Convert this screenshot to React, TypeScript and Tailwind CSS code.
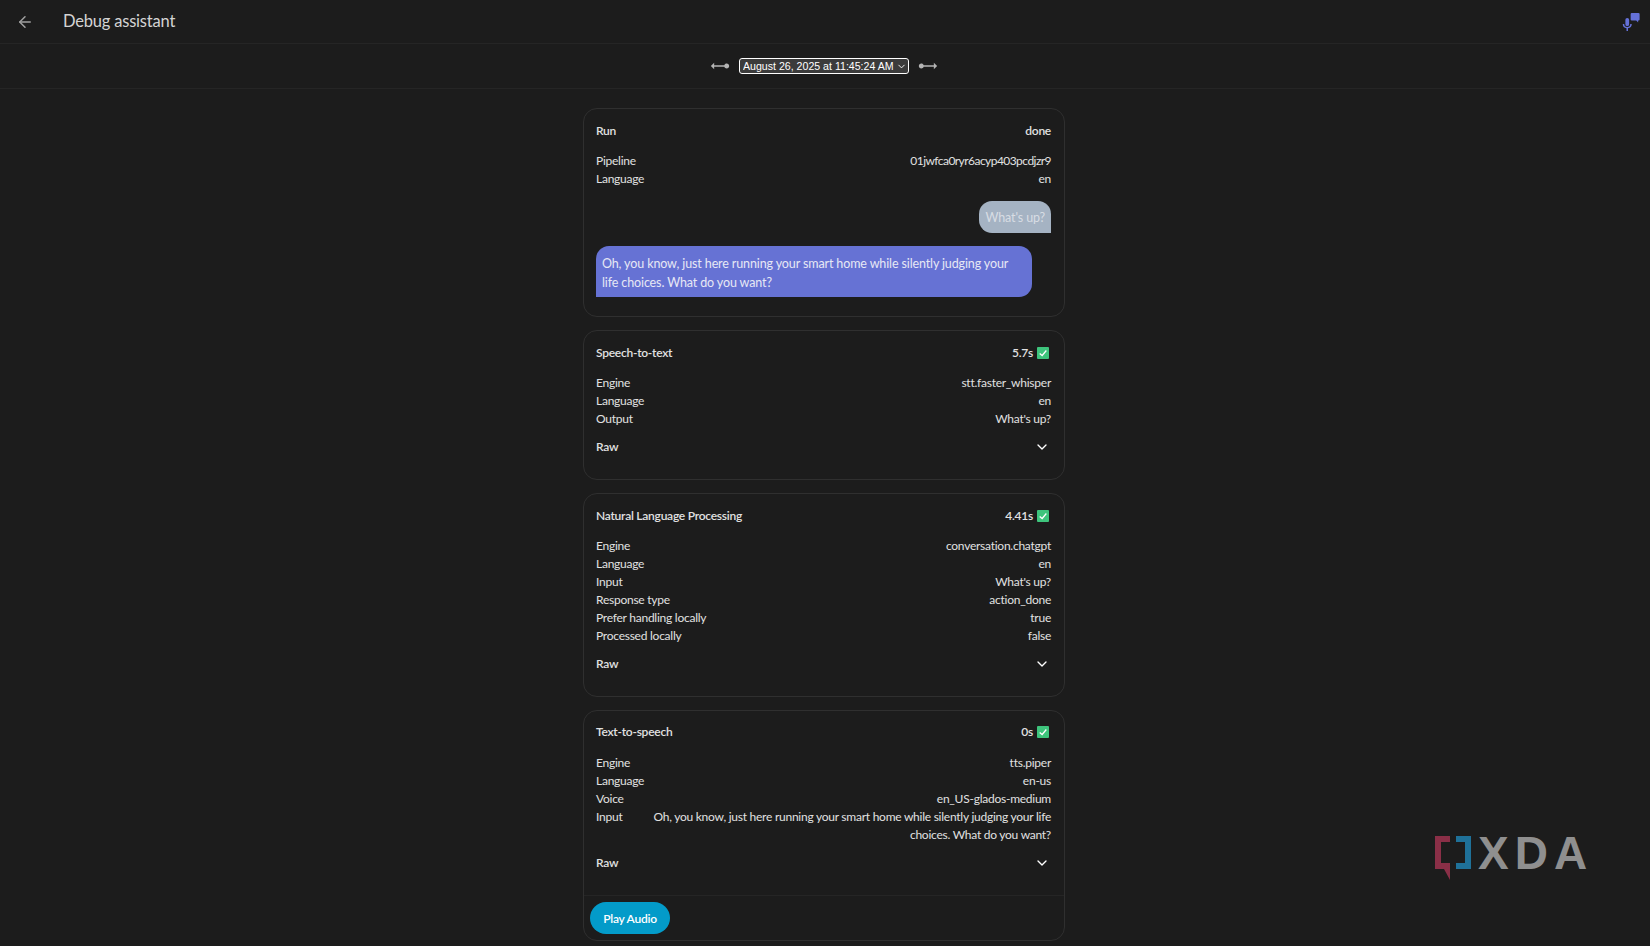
import React from "react";
import { ArrowLeft, ChevronDown } from "lucide-react";

type Row = [string, string];

interface Stage {
  title: string;
  time: string;
  rows: Row[];
}

const stages: Stage[] = [
  {
    title: "Speech-to-text",
    time: "5.7s",
    rows: [
      ["Engine", "stt.faster_whisper"],
      ["Language", "en"],
      ["Output", "What's up?"],
    ],
  },
  {
    title: "Natural Language Processing",
    time: "4.41s",
    rows: [
      ["Engine", "conversation.chatgpt"],
      ["Language", "en"],
      ["Input", "What's up?"],
      ["Response type", "action_done"],
      ["Prefer handling locally", "true"],
      ["Processed locally", "false"],
    ],
  },
];

const ttsRows: Row[] = [
  ["Engine", "tts.piper"],
  ["Language", "en-us"],
  ["Voice", "en_US-glados-medium"],
  ["Input", "Oh, you know, just here running your smart home while silently judging your life choices. What do you want?"],
];

const RayIcon = ({ flip }: { flip?: boolean }) => (
  <svg viewBox="0 0 24 24" className={`w-[20px] h-[20px] text-[#b4b4b4] ${flip ? "-scale-x-100" : ""}`} fill="currentColor">
    <path d="M23 12L19 8V11H6.8C6.4 9.8 5.3 9 4 9C2.3 9 1 10.3 1 12S2.3 15 4 15C5.3 15 6.4 14.2 6.8 13H19V16L23 12Z" />
  </svg>
);

const Rows = ({ rows }: { rows: Row[] }) => (
  <div className="mt-[12px]">
    {rows.map(([label, value]) => (
      <div key={label} className="flex justify-between gap-[22px] leading-[18px]">
        <div className="shrink-0">{label}</div>
        <div className={`text-right ${label === "Pipeline" ? "tracking-[-0.55px]" : ""}`}>{value}</div>
      </div>
    ))}
  </div>
);

const CardHead = ({ title, time }: { title: string; time: string }) => (
  <div className="flex justify-between items-center h-[18px] font-semibold">
    <div>{title}</div>
    <div className="flex items-center gap-[4px]">
      {time}
      <div className="w-[12px] h-[12px] bg-[#3ec47c] rounded-[1px] flex items-center justify-center mr-[2px]">
        <svg viewBox="0 0 12 12" className="w-[10px] h-[10px]" fill="none" stroke="#fff" strokeWidth="1.5">
          <path d="M2 6.5L5 9L10 3" />
        </svg>
      </div>
    </div>
  </div>
);

const RawRow = () => (
  <div className="flex justify-between items-center h-[18px] mt-[10px] font-semibold">
    <div>Raw</div>
    <ChevronDown className="w-[16px] h-[16px] text-white mr-[1px]" />
  </div>
);

export default function App() {
  return (
    <div className="h-screen overflow-hidden bg-[#1c1c1c] text-[#e1e1e1] text-[12px] tracking-[-0.25px] font-['Lato',sans-serif] relative">
      {/* Header */}
      <div className="h-[44px] border-b border-[#252525] flex items-center pl-[16px] pr-[10px]">
        <ArrowLeft className="w-[18px] h-[18px] text-[#a0a0a0]" />
        <div className="ml-[29px] text-[16.5px] tracking-[-0.2px] text-[#d4d4d4]">Debug assistant</div>
        <svg viewBox="0 0 24 24" className="ml-auto w-[18px] h-[18px] text-[#6571d8]" fill="currentColor">
          <path d="M13 0h9a1.5 1.5 0 0 1 1.5 1.5v7A1.5 1.5 0 0 1 22 10h-.5v2.500L19 10h-6a1.5 1.5 0 0 1-1.500-1.500v-7A1.500 1.500 0 0 1 13 0z" />
          <path d="M7 6.500a2.500 2.500 0 0 1 2.500 2.500v6a2.500 2.500 0 0 1-5 0V9A2.500 2.500 0 0 1 7 6.500z" />
          <path d="M1 14.500h2a4 4 0 0 0 8 0h2a6 6 0 0 1-5 5.800V24H6v-3.700a6 6 0 0 1-5-5.800z" />
        </svg>
      </div>

      {/* Run picker */}
      <div className="h-[45px] border-b border-[#252525] flex items-center justify-center pr-[2px]">
        <RayIcon flip />
        <div className="relative mx-[10px] -mt-[1px]">
          <select className="block appearance-none w-[168px] h-[14px] pl-[3px] bg-[#3b3b3b] text-white text-[10.6px] tracking-normal font-['Liberation_Sans',sans-serif] rounded-[2px] outline-[1.5px] outline-white">
            <option>August 26, 2025 at 11:45:24 AM</option>
          </select>
          <ChevronDown className="absolute right-[1px] top-[2px] w-[11px] h-[11px] text-white pointer-events-none" />
        </div>
        <RayIcon />
      </div>

      <div className="w-[482px] ml-[583px] mt-[19px] flex flex-col gap-[13px]">
        {/* Run */}
        <div className="border border-[#2f2f2f] rounded-[14px] pl-[12px] pr-[13px] pt-[13px] pb-[19px]">
          <div className="flex justify-between items-center h-[18px] font-semibold">
            <div>Run</div>
            <div>done</div>
          </div>
          <Rows
            rows={[
              ["Pipeline", "01jwfca0ryr6acyp403pcdjzr9"],
              ["Language", "en"],
            ]}
          />
          <div className="flex justify-end mt-[13px]">
            <div className="h-[32px] px-[6px] pt-[2px] flex items-center text-[12.5px] tracking-[-0.12px] text-[#d8dde3] bg-[#a5b3c3] rounded-t-[13px] rounded-bl-[13px]">
              What's up?
            </div>
          </div>
          <div className="mt-[13px] w-[436px] h-[51px] px-[6px] pt-[8px] text-[12.5px] tracking-[-0.12px] leading-[19px] text-[#e6e8f5] bg-[#6672d4] rounded-t-[13px] rounded-br-[13px]">
            Oh, you know, just here running your smart home while silently judging your life choices. What do you want?
          </div>
        </div>

        {stages.map((stage) => (
          <div key={stage.title} className="border border-[#2f2f2f] rounded-[14px] pl-[12px] pr-[13px] pt-[13px] pb-[23px]">
            <CardHead title={stage.title} time={stage.time} />
            <Rows rows={stage.rows} />
            <RawRow />
          </div>
        ))}

        {/* Text-to-speech */}
        <div className="border border-[#2f2f2f] rounded-[14px]">
          <div className="pl-[12px] pr-[13px] pt-[12px] pb-[23px] border-b border-[#252525]">
            <CardHead title="Text-to-speech" time="0s" />
            <div className="pt-[1px]">
              <Rows rows={ttsRows} />
            </div>
            <RawRow />
          </div>
          <div className="px-[6px] pt-[6px] pb-[6px]">
            <button className="w-[80px] h-[32px] pt-[1px] rounded-full bg-[#039bc9] text-white font-semibold">Play Audio</button>
          </div>
        </div>
      </div>

      {/* Watermark */}
      <div className="absolute left-[1435px] top-[836px] flex items-start">
        <svg viewBox="0 0 36 44" className="w-[36px] h-[44px]">
          <path d="M0 0H15V6H6V27H15V44L9 33H0Z" fill="#8a2f47" />
          <path d="M21 0H36V33H21V27H30V6H21Z" fill="#1f7199" />
        </svg>
        <div className="ml-[7px] -mt-[9px] text-[#8f8f8f] text-[46px] leading-[52px] font-bold font-['Liberation_Sans',sans-serif] tracking-[6px]">
          XDA
        </div>
      </div>
    </div>
  );
}
